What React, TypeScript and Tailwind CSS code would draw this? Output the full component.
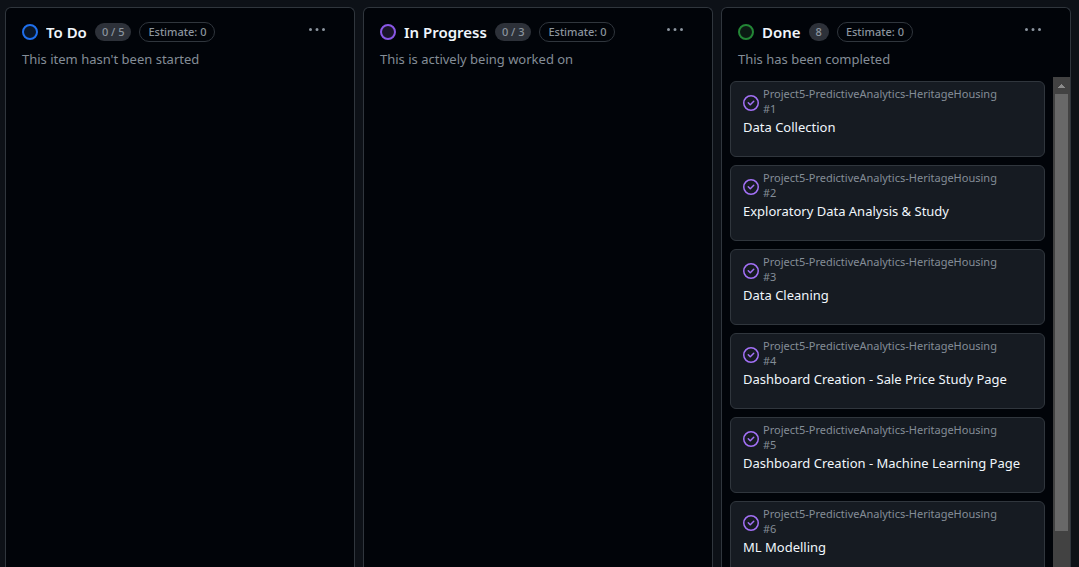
type Card = { id: number; title: string };

type Column = {
  title: string;
  count: string;
  description: string;
  ring: string;
  cards: Card[];
};

const REPOSITORY = "Project5-PredictiveAnalytics-HeritageHousing";

const columns: Column[] = [
  {
    title: "To Do",
    count: "0 / 5",
    description: "This item hasn't been started",
    ring: "border-[#1f6feb] bg-[#0a1626]",
    cards: [],
  },
  {
    title: "In Progress",
    count: "0 / 3",
    description: "This is actively being worked on",
    ring: "border-[#8957e5] bg-[#1a1528]",
    cards: [],
  },
  {
    title: "Done",
    count: "8",
    description: "This has been completed",
    ring: "border-[#238636] bg-[#0b1a13]",
    cards: [
      { id: 1, title: "Data Collection" },
      { id: 2, title: "Exploratory Data Analysis & Study" },
      { id: 3, title: "Data Cleaning" },
      { id: 4, title: "Dashboard Creation - Sale Price Study Page" },
      { id: 5, title: "Dashboard Creation - Machine Learning Page" },
      { id: 6, title: "ML Modelling" },
    ],
  },
];

function ClosedIcon() {
  return (
    <svg className="mt-1 size-4 shrink-0 fill-[#a371f7]" viewBox="0 0 16 16" aria-hidden="true">
      <path d="M11.28 6.78a.75.75 0 0 0-1.06-1.06L7.25 8.69 5.78 7.22a.75.75 0 0 0-1.06 1.06l2 2a.75.75 0 0 0 1.06 0l3.5-3.5Z" />
      <path d="M16 8A8 8 0 1 1 0 8a8 8 0 0 1 16 0Zm-1.5 0a6.5 6.5 0 1 0-13 0 6.5 6.5 0 0 0 13 0Z" />
    </svg>
  );
}

function MoreIcon() {
  return (
    <svg className="size-4 fill-[#8b949e]" viewBox="0 0 16 16" aria-hidden="true">
      <path d="M8 9a1.5 1.5 0 1 0 0-3 1.5 1.5 0 0 0 0 3ZM1.5 9a1.5 1.5 0 1 0 0-3 1.5 1.5 0 0 0 0 3Zm13 0a1.5 1.5 0 1 0 0-3 1.5 1.5 0 0 0 0 3Z" />
    </svg>
  );
}

function ColumnHeader({ column }: { column: Column }) {
  return (
    <header className="px-4 pt-3.5 pb-2">
      <div className="flex items-start justify-between">
        <div className="flex h-5 min-w-0 items-center gap-2">
          <span className={`size-4 shrink-0 rounded-full border-2 ${column.ring}`} />
          <h2 className="truncate text-[15px] leading-6 font-semibold text-[#f0f6fc]">{column.title}</h2>
          <span className="shrink-0 rounded-full bg-[#2d3139] px-[7px] text-[11px] leading-[18px] font-medium text-[#8b949e]">
            {column.count}
          </span>
          <span className="shrink-0 rounded-full border border-[#30363d] px-2 text-[11px] leading-[18px] font-medium text-[#8b949e]">
            Estimate: 0
          </span>
        </div>
        <button type="button" aria-label={`More actions for ${column.title}`} className="mr-[13px]">
          <MoreIcon />
        </button>
      </div>
      <p className="mt-[7px] text-[13px] leading-5 text-[#848d97]">{column.description}</p>
    </header>
  );
}

function IssueCard({ card }: { card: Card }) {
  return (
    <li className="rounded-md border border-[#30363d] bg-[#161b22] px-3 pt-1 pb-[19px]">
      <div className="flex items-center gap-1 text-[11px] leading-[15px] text-[#848d97]">
        <ClosedIcon />
        <p className="min-w-0">
          {REPOSITORY}
          <br />#{card.id}
        </p>
      </div>
      <a href={`#issue-${card.id}`} className="mt-px block text-[13px] leading-5 text-[#f0f6fc]">
        {card.title}
      </a>
    </li>
  );
}

function Scrollbar() {
  return (
    <div className="flex w-[17px] shrink-0 flex-col items-center bg-[#424242] pb-9" aria-hidden="true">
      <div className="flex h-[17px] shrink-0 items-center">
        <svg className="h-1 w-[7px] fill-[#8b8b8b]" viewBox="0 0 7 4">
          <path d="M3 0h1v1h1v1h1v1h1v1H0V3h1V2h1V1h1Z" />
        </svg>
      </div>
      <div className="w-[13px] grow bg-[#686868]" />
    </div>
  );
}

export default function App() {
  return (
    <main className="grid h-screen grid-cols-3 gap-2 overflow-hidden bg-[#0d1117] pt-[7px] pr-2 pl-[5px] font-['Noto_Sans',sans-serif]">
      {columns.map((column) => (
        <section
          key={column.title}
          className="flex min-h-0 min-w-0 flex-col rounded-t-md border border-b-0 border-[#30363d] bg-[#010409]"
        >
          <ColumnHeader column={column} />
          {column.cards.length > 0 && (
            <div className="flex min-h-0 grow">
              <ul className="flex min-w-0 grow flex-col gap-2 overflow-hidden px-2 pt-1">
                {column.cards.map((card) => (
                  <IssueCard key={card.id} card={card} />
                ))}
              </ul>
              <Scrollbar />
            </div>
          )}
        </section>
      ))}
    </main>
  );
}
